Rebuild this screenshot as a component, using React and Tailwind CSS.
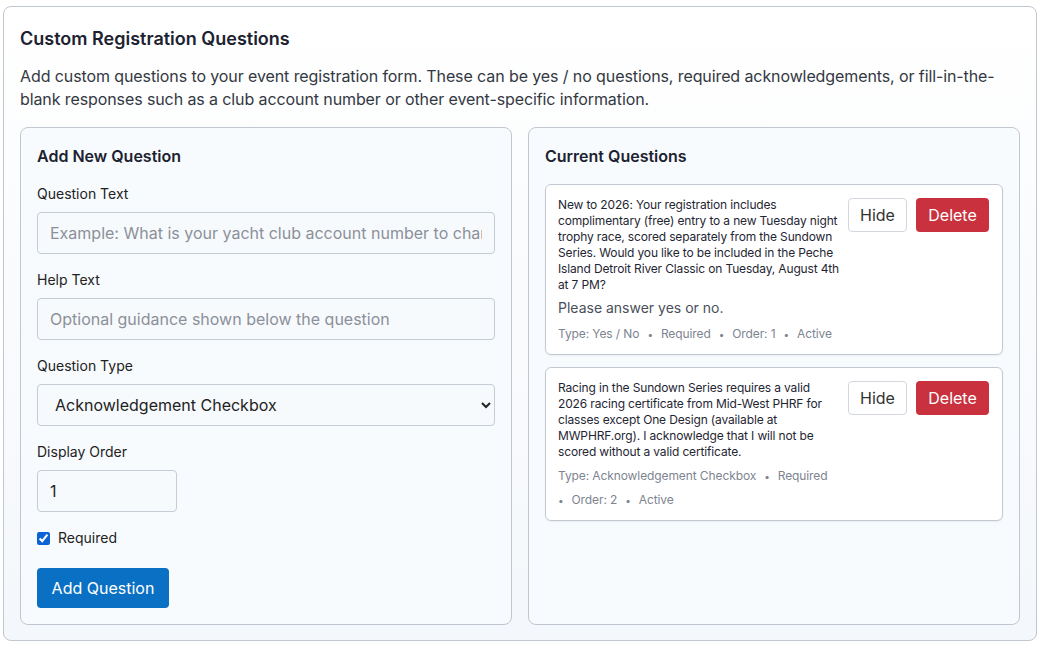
const questions = [
  {
    text: "New to 2026: Your registration includes complimentary (free) entry to a new Tuesday night trophy race, scored separately from the Sundown Series. Would you like to be included in the Peche Island Detroit River Classic on Tuesday, August 4th at 7 PM?",
    help: "Please answer yes or no.",
    meta: ["Type: Yes / No", "Required", "Order: 1", "Active"],
  },
  {
    text: "Racing in the Sundown Series requires a valid 2026 racing certificate from Mid-West PHRF for classes except One Design (available at MWPHRF.org). I acknowledge that I will not be scored without a valid certificate.",
    help: null,
    meta: ["Type: Acknowledgement Checkbox", "Required", "Order: 2", "Active"],
  },
];

const inputCls =
  "w-full h-[42px] px-3 rounded-[4px] border border-[#c6ccd5] bg-[#f7fafd] text-[16px] text-[#222] placeholder:text-[#8b9099] outline-none";

const QuestionCard = ({ q }) => (
  <div className="flex gap-[8px] rounded-[6px] border border-[#c3c9d3] bg-white pl-3 pr-[13px] pt-[12px] pb-[8px] shadow-[0_1px_2px_rgba(0,0,0,0.06)]">
    <div className="flex-1 min-w-0">
      <p className="text-[12px] leading-[16px] text-[#1f2633] tracking-[-0.15px]">{q.text}</p>
      {q.help && <p className="mt-[5px] text-[14px] leading-[20px] text-[#4a505a]">{q.help}</p>}
      <div className="mt-[4px] flex flex-wrap items-center gap-x-[8px] text-[12px] leading-[24px] text-[#7d8490] tracking-[-0.1px]">
        {q.meta.map((m, i) => (
          <span key={m} className="flex items-center gap-[8px]">
            {i > 0 && <span className="text-[10px]">•</span>}
            {m}
          </span>
        ))}
      </div>
    </div>
    <div className="flex gap-[9px] items-start pt-px">
      <button className="h-[34px] w-[59px] rounded-[4px] border border-[#d3d8df] bg-white text-[16px] text-[#333]">Hide</button>
      <button className="h-[34px] w-[73px] rounded-[4px] bg-[#c8313d] text-[16px] text-white">Delete</button>
    </div>
  </div>
);

export default function App() {
  return (
    <div className="min-h-screen bg-white p-[3px] pt-[6px]" style={{ fontFamily: "Inter, 'Noto Sans', sans-serif" }}>
      <div className="w-[1034px] rounded-[8px] border border-[#c1c7d0] bg-gradient-to-b from-white to-[#f4f7fb] px-[16px] pt-[18px] pb-[15px]">
        <h1 className="text-[18px] leading-[28px] font-semibold text-[#1c2230]">Custom Registration Questions</h1>
        <p className="mt-[12px] text-[16px] leading-[23px] text-[#333842] tracking-[-0.1px]">
          Add custom questions to your event registration form. These can be yes / no questions, required acknowledgements, or fill-in-the-blank responses such as a club account number or other event-specific information.
        </p>
        <div className="mt-[16px] grid grid-cols-2 gap-[16px]">
          <div className="rounded-[8px] border border-[#c1c7d0] bg-[#f8fbfd] px-[16px] pt-[16px] pb-[16px]">
            <h2 className="text-[16px] leading-[24px] font-semibold text-[#1c2230]">Add New Question</h2>
            <label className="block mt-[16px] text-[14px] leading-[20px] text-[#222]">Question Text</label>
            <input className={`${inputCls} mt-[8px]`} placeholder="Example: What is your yacht club account number to charge?" />
            <label className="block mt-[16px] text-[14px] leading-[20px] text-[#222]">Help Text</label>
            <input className={`${inputCls} mt-[8px]`} placeholder="Optional guidance shown below the question" />
            <label className="block mt-[16px] text-[14px] leading-[20px] text-[#222]">Question Type</label>
            <select className={`${inputCls} mt-[8px] pl-[13px] pr-2`} defaultValue="ack">
              <option value="yesno">Yes / No</option>
              <option value="ack">Acknowledgement Checkbox</option>
              <option value="text">Text Response</option>
            </select>
            <label className="block mt-[16px] text-[14px] leading-[20px] text-[#222]">Display Order</label>
            <input className={`${inputCls} mt-[8px] !w-[140px]`} defaultValue="1" />
            <label className="mt-[16px] flex items-center gap-[8px] text-[14px] leading-[20px] text-[#222]">
              <input type="checkbox" defaultChecked className="w-[13px] h-[13px] accent-[#0b63d6]" />
              Required
            </label>
            <button className="mt-[20px] h-[40px] w-[132px] rounded-[4px] bg-[#0a70c4] text-[16px] text-white">Add Question</button>
          </div>
          <div className="rounded-[8px] border border-[#c1c7d0] bg-[#f8fbfd] px-[16px] pt-[16px] pb-[16px]">
            <h2 className="text-[16px] leading-[24px] font-semibold text-[#1c2230]">Current Questions</h2>
            <div className="mt-[16px] flex flex-col gap-[12px]">
              {questions.map((q) => (
                <QuestionCard key={q.text} q={q} />
              ))}
            </div>
          </div>
        </div>
      </div>
    </div>
  );
}
